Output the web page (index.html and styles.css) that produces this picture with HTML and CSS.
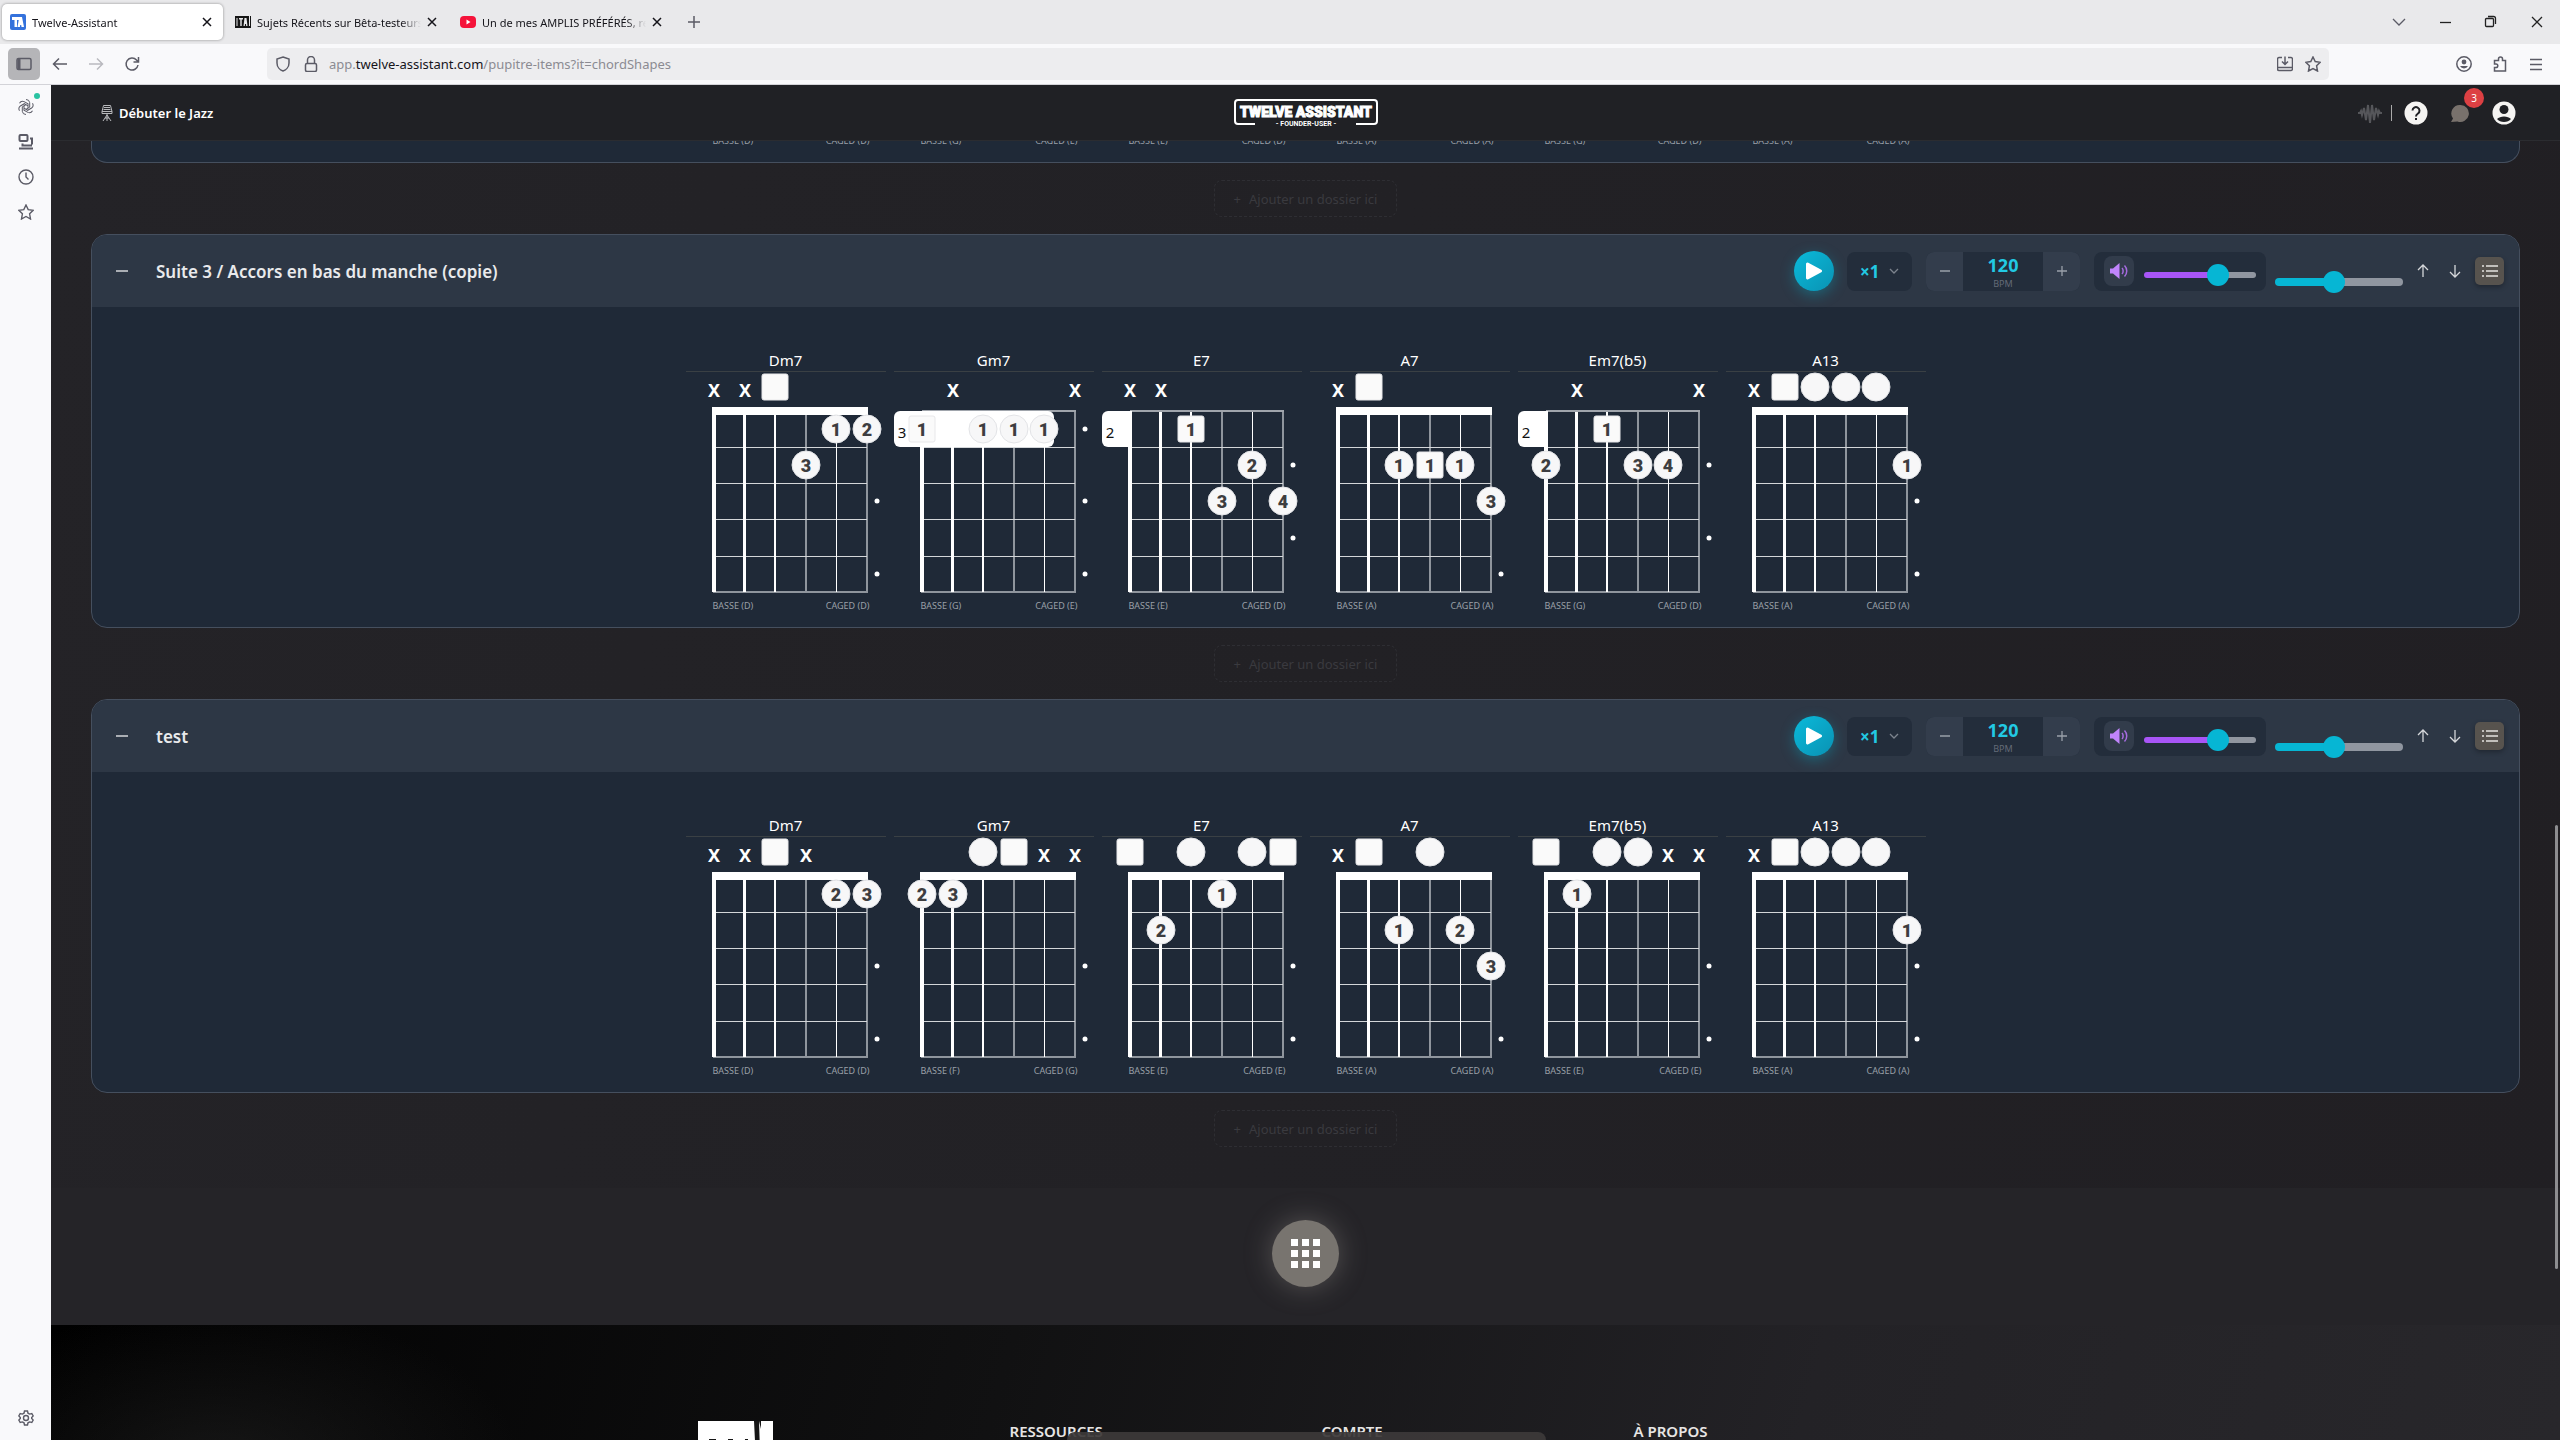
FILE: index.html
```html
<!DOCTYPE html>
<html lang="fr">
<head>
<meta charset="utf-8">
<title>Twelve-Assistant</title>
<link rel="stylesheet" href="styles.css">
</head>
<body>
<svg class="defs" aria-hidden="true">
  <defs>
    <g id="frets" fill="none" stroke="#fff">
      <path stroke="#8f959d" stroke-width="2" d="M120 39V220M181 39V221M27 220H182"/>
      <path stroke="#d3d6d9" stroke-width="1" d="M28 75.5H181M28 111.5H181M28 147.5H181M28 184.5H181"/>
      <path stroke-width="4" d="M28 39V220"/>
      <path stroke-width="3" d="M58.500 39V220"/>
      <path stroke-width="2" d="M89 39V220"/>
      <path stroke-width="1" d="M150.500 39V220"/>
    </g>
    <g id="open"><use href="#frets"/><path fill="#fff" d="M26 35H182V43H26z"/></g>
    <g id="high"><use href="#frets"/><path fill="#a0a5ac" d="M28 38H182V40H28z"/></g>
    <g id="o"><circle r="14" fill="#f7f7f8" stroke="#e3e4e7"/></g>
    <g id="s"><rect x="-13" y="-13" width="26" height="26" rx="2" fill="#fafafa" stroke="#e8e8ea"/></g>
    <g id="x"><text y="10" class="mute">X</text></g>
    <circle id="d" r="2.500" fill="#fff"/>
    <path id="pos" fill="#fff" d="M6 39H30V75H6a6 6 0 0 1-6-6V45a6 6 0 0 1 6-6z"/>
  </defs>
</svg>

<div class="tabstrip">
  <div class="tabs">
    <div class="tab active">
      <svg width="16" height="16" viewBox="0 0 16 16"><rect width="16" height="16" rx="2" fill="#3472dc"/><path fill="#fff" d="M2 3h7l1 0h2l2 10h-2.500l-.3-2h-1l-.3 2H7.500L8.700 6H7v7H4.500V6H2z"/></svg>
      <span class="label">Twelve-Assistant</span><button class="close" aria-label="Fermer l’onglet"><svg width="10" height="10" viewBox="0 0 10 10"><path d="M1 1l8 8M9 1L1 9"/></svg></button>
    </div>
    <div class="tab">
      <svg width="16" height="16" viewBox="0 0 16 16"><path fill="#151515" d="M0 2h16v12H0z"/><path fill="#e9e9eb" d="M1.500 4h1v8h-1zM4 4h4v1.500H6.700V12H5.300V5.500H4zM9.500 4h2l1 8h-1.300l-.2-2h-1l-.2 2H8.500zM14 2h1v10h-1z"/></svg>
      <span class="label">Sujets Récents sur Bêta-testeurs</span><button class="close" aria-label="Fermer l’onglet"><svg width="10" height="10" viewBox="0 0 10 10"><path d="M1 1l8 8M9 1L1 9"/></svg></button>
    </div>
    <div class="tab">
      <svg width="16" height="16" viewBox="0 0 16 16"><rect y="2" width="16" height="12" rx="4" fill="#f5133a"/><path fill="#fff" d="M6.500 5.500v5l4-2.500z"/></svg>
      <span class="label">Un de mes AMPLIS PRÉFÉRÉS, re</span><button class="close" aria-label="Fermer l’onglet"><svg width="10" height="10" viewBox="0 0 10 10"><path d="M1 1l8 8M9 1L1 9"/></svg></button>
    </div>
    <button class="newtab" aria-label="Nouvel onglet"><svg width="12" height="12" viewBox="0 0 12 12"><path d="M6 0v12M0 6h12"/></svg></button>
  </div>
  <div class="window">
    <button aria-label="Lister les onglets"><svg width="14" height="14" viewBox="0 0 14 14"><path d="M1 4l6 6 6-6"/></svg></button>
    <button aria-label="Réduire"><svg width="14" height="14" viewBox="0 0 14 14"><path stroke="#222" d="M2 7.500h11"/></svg></button>
    <button aria-label="Restaurer"><svg width="14" height="14" viewBox="0 0 14 14"><path stroke="#222" d="M1.500 4.500a1 1 0 0 1 1-1h6a1 1 0 0 1 1 1v6a1 1 0 0 1-1 1h-6a1 1 0 0 1-1-1zM4 1.500h5.500a2 2 0 0 1 2 2V9"/></svg></button>
    <button aria-label="Fermer"><svg width="14" height="14" viewBox="0 0 14 14"><path stroke="#222" d="M2 2l10 10M12 2L2 12"/></svg></button>
  </div>
</div>

<div class="navbar">
  <div class="navkeys">
    <button class="pressed" aria-label="Panneau latéral"><svg width="16" height="16" viewBox="0 0 16 16"><rect x="1" y="2.500" width="14" height="11" rx="1.500"/><path stroke-width="3" d="M3 3v10"/></svg></button>
    <button aria-label="Précédent"><svg width="16" height="16" viewBox="0 0 16 16"><path d="M15 8H1.500M7 2.500L1.500 8 7 13.500"/></svg></button>
    <button disabled aria-label="Suivant"><svg width="16" height="16" viewBox="0 0 16 16"><path d="M1 8h13.500M9 2.500L14.500 8 9 13.500"/></svg></button>
    <button aria-label="Actualiser"><svg width="16" height="16" viewBox="0 0 16 16"><path d="M14 9a6 6 0 1 1-1.500-5L14 5.500M14.500 1v5h-5"/></svg></button>
  </div>
  <div class="urlbar">
    <svg width="16" height="16" viewBox="0 0 16 16"><path d="M8 1l6 2v4c0 4-3 7-6 8-3-1-6-4-6-8V3z"/></svg>
    <svg width="16" height="16" viewBox="0 0 16 16"><rect x="2.500" y="7.500" width="11" height="8" rx="1.500"/><path d="M4.500 7.500V4a3.500 3.500 0 0 1 7 0v3.500"/></svg>
    <div class="address" role="textbox" contenteditable="true" spellcheck="false" aria-label="Adresse">app.<b>twelve-assistant.com</b>/pupitre-items?it=chordShapes</div>
    <button aria-label="Installer"><svg width="16" height="16" viewBox="0 0 16 16"><path d="M5 1.500H2A1.500 1.500 0 0 0 .5 3v10A1.500 1.500 0 0 0 2 14.500h12a1.500 1.500 0 0 0 1.500-1.500V3A1.500 1.500 0 0 0 14 1.500h-3M.5 11.500h15M8 .5v8M5 5.500l3 3 3-3"/></svg></button>
    <button aria-label="Favori"><svg width="16" height="16" viewBox="0 0 16 16"><path d="M8 1l2.200 4.600 5 .7-3.600 3.500.9 5.200L8 12.500 3.500 15l.9-5.200L.8 6.300l5-.7z"/></svg></button>
  </div>
  <div class="navend">
    <button aria-label="Compte"><svg width="16" height="16" viewBox="0 0 16 16"><circle cx="8" cy="8" r="7.200"/><circle cx="8" cy="6" r="2.400" fill="#5b5b66" stroke="none"/><path fill="#5b5b66" stroke="none" d="M4 10h8a4.500 4.500 0 0 1-8 0z"/></svg></button>
    <button aria-label="Extensions"><svg width="16" height="16" viewBox="0 0 16 16"><path d="M2.500 4.500h4V3a2 2 0 0 1 4 0v1.500h3v10.500h-11v-3.500H4a1.800 1.800 0 0 0 0-3.600H2.500z"/></svg></button>
    <button aria-label="Menu"><svg width="14" height="14" viewBox="0 0 14 14"><path d="M1 2.500h12M1 7.500h12M1 12.500h12"/></svg></button>
  </div>
</div>

<div class="view">
  <nav class="rail">
    <button class="notify" aria-label="ChatGPT"><svg width="18" height="18" viewBox="0 0 18 18"><g fill="none" stroke-width="1"><path d="M9 1.500a3.700 3.700 0 0 1 3.700 3.200v4.500L9 11.300"/><path transform="rotate(60 9 9)" d="M9 1.500a3.700 3.700 0 0 1 3.700 3.200v4.500L9 11.300"/><path transform="rotate(120 9 9)" d="M9 1.500a3.700 3.700 0 0 1 3.700 3.200v4.500L9 11.300"/><path transform="rotate(180 9 9)" d="M9 1.500a3.700 3.700 0 0 1 3.700 3.200v4.500L9 11.300"/><path transform="rotate(240 9 9)" d="M9 1.500a3.700 3.700 0 0 1 3.700 3.200v4.500L9 11.300"/><path transform="rotate(300 9 9)" d="M9 1.500a3.700 3.700 0 0 1 3.700 3.200v4.500L9 11.300"/></g></svg></button>
    <button aria-label="Onglets synchronisés"><svg width="16" height="16" viewBox="0 0 16 16"><rect x="1.500" y="1" width="8" height="6" rx="1" stroke-width="2"/><path stroke-width="2" d="M12 4.500h2v6M4.500 9.500v2H14M1 14.500h14"/></svg></button>
    <button aria-label="Historique"><svg width="16" height="16" viewBox="0 0 16 16"><circle cx="8" cy="8" r="7"/><path d="M8 3.500V8l2.500 2.500"/></svg></button>
    <button aria-label="Marque-pages"><svg width="16" height="16" viewBox="0 0 16 16"><path d="M8 1l2.200 4.600 5 .7-3.600 3.500.9 5.200L8 12.500 3.500 15l.9-5.200L.8 6.300l5-.7z"/></svg></button>
    <button class="last" aria-label="Paramètres"><svg width="16" height="16" viewBox="0 0 16 16"><circle cx="8" cy="8" r="2.500"/><path d="M6.500 1h3l.5 2.200 1.600.9 2.200-.6 1.400 2.400L13.700 7.500v1l1.500 1.600-1.400 2.400-2.200-.6-1.600.9L9.500 15h-3L6 12.800l-1.600-.9-2.200.6L.8 10.100l1.500-1.600v-1L.8 5.900l1.400-2.400 2.200.6L6 3.200z"/></svg></button>
  </nav>

  <div class="app">
    <header class="topbar">
      <a class="place" href="#"><svg width="12" height="18" viewBox="0 0 12 18" fill="none" stroke="#b9babd" stroke-width="1"><path d="M2.500 1.500h7l1.500 6H1zM3 3.500h6M2.500 5.500h7M1 7.500v2h10v-2M6 9.500V14M6 11l-4 6M6 11l4 6M4 14h4M6 14v3"/></svg>Débuter le Jazz</a>
      <a class="brand" href="#" aria-label="Twelve Assistant"><svg width="146" height="30" viewBox="0 0 146 30"><path fill="none" stroke="#fff" stroke-width="2" d="M22 26H5a3 3 0 0 1-3-3V5a3 3 0 0 1 3-3h136a3 3 0 0 1 3 3v18a3 3 0 0 1-3 3h-18"/><text class="brand-name" x="73" y="19" text-anchor="middle">TWELVE ASSISTANT</text><text class="brand-sub" x="73" y="28" text-anchor="middle">- FOUNDER-USER -</text></svg></a>
      <div class="tools">
        <svg width="24" height="20" viewBox="0 0 24 20" stroke="#55565a" stroke-width="2" fill="none"><path d="M0 10h2l1-2 1 4 2-7 2 12 2-15 2 18 2-18 2 15 2-12 2 7 1-4 1 2h2"/></svg>
        <span class="rule"></span>
        <button aria-label="Aide"><svg width="24" height="24" viewBox="0 0 24 24"><circle cx="12" cy="12" r="11.500" fill="#f5f4f2"/><path fill="none" stroke="#1f2024" stroke-width="2" d="M8.500 9.500a3.500 3.500 0 1 1 5.500 3c-1.500 1-2 1.500-2 3M12 17v2"/></svg></button>
        <button class="chat" aria-label="Messages"><svg width="20" height="20" viewBox="0 0 20 20"><path fill="#78716c" d="M10.500 2a8.500 8.500 0 1 1-3 16.500L1 19l2-3.500A8.500 8.500 0 0 1 10.500 2z"/></svg><span class="badge">3</span></button>
        <button aria-label="Profil"><svg width="24" height="24" viewBox="0 0 24 24"><circle cx="12" cy="12" r="11.500" fill="#f5f4f2"/><circle cx="12" cy="8.500" r="4.500" fill="#1f2024"/><path fill="#1f2024" d="M5 18c3-3.500 11-3.500 14 0-3 4-11 4-14 0z"/></svg></button>
      </div>
    </header>

    <main class="folders">
      <section class="folder cut">
        <div class="chords">
          <div class="tags"><span>BASSE (D)</span><span>CAGED (D)</span></div>
          <div class="tags"><span>BASSE (G)</span><span>CAGED (E)</span></div>
          <div class="tags"><span>BASSE (E)</span><span>CAGED (D)</span></div>
          <div class="tags"><span>BASSE (A)</span><span>CAGED (A)</span></div>
          <div class="tags"><span>BASSE (G)</span><span>CAGED (D)</span></div>
          <div class="tags"><span>BASSE (A)</span><span>CAGED (A)</span></div>
        </div>
      </section>
      <button class="add"><span>+</span>Ajouter un dossier ici</button>

      <section class="folder">
        <header class="bar">
          <button class="fold" aria-label="Replier"><svg width="14" height="14" viewBox="0 0 14 14"><path d="M1 7h12"/></svg></button>
          <h2>Suite 3 / Accors en bas du manche (copie)</h2>
          <button class="play" aria-label="Lecture"><svg width="40" height="40" viewBox="0 0 40 40"><path fill="#fff" d="M12 13a1.500 1.500 0 0 1 2.300-1.300l13 7a1.500 1.500 0 0 1 0 2.600l-13 7A1.500 1.500 0 0 1 12 27z"/></svg></button>
          <div class="times"><select aria-label="Répétitions"><option>×1</option></select><svg width="12" height="12" viewBox="0 0 12 12"><path d="M2 4l4 4 4-4"/></svg></div>
          <div class="tempo">
            <button aria-label="Ralentir"><svg width="12" height="12" viewBox="0 0 12 12"><path d="M1 6h10"/></svg></button>
            <label><input type="text" value="120"><span>BPM</span></label>
            <button aria-label="Accélérer"><svg width="12" height="12" viewBox="0 0 12 12"><path d="M1 6h10M6 1v10"/></svg></button>
          </div>
          <div class="volume">
            <button aria-label="Muet"><svg width="20" height="20" viewBox="0 0 20 20"><path fill="#c084fc" d="M1 7.500h3L10.500 2v16L4 12.500H1z"/><path fill="none" stroke="#a66be0" stroke-width="1.500" d="M13 7c1.500 1.500 1.500 4.500 0 6M15.500 4.500c3 3 3 8 0 11"/></svg></button>
            <input class="purple" type="range" value="70" aria-label="Volume">
          </div>
          <input class="cyan" type="range" value="45" aria-label="Taille">
          <div class="moves">
            <button aria-label="Monter"><svg width="14" height="14" viewBox="0 0 14 14"><path d="M7 13V1M2 6l5-5 5 5"/></svg></button>
            <button aria-label="Descendre"><svg width="14" height="14" viewBox="0 0 14 14"><path d="M7 1v12M2 8l5 5 5-5"/></svg></button>
          </div>
          <button class="list" aria-label="Liste"><svg width="16" height="16" viewBox="0 0 16 16"><path d="M0 3h2M4 3h12M0 8h2M4 8h12M0 13h2M4 13h12"/></svg></button>
        </header>
        <div class="chords">
          <article><h3>Dm7</h3><svg class="grid" viewBox="0 0 200 228"><use href="#open"/><use href="#x" x="28" y="15"/><use href="#x" x="59" y="15"/><use href="#s" x="89" y="15"/><use href="#o" x="150" y="57"/><text x="150" y="64">1</text><use href="#o" x="181" y="57"/><text x="181" y="64">2</text><use href="#o" x="120" y="93"/><text x="120" y="100">3</text><use href="#d" x="191" y="129"/><use href="#d" x="191" y="202"/></svg><div class="tags"><span>BASSE (D)</span><span>CAGED (D)</span></div></article>
          <article><h3>Gm7</h3><svg class="grid" viewBox="0 0 200 228"><use href="#high"/><rect y="39" width="160" height="36" rx="6" fill="#fff"/><text class="fret" x="8" y="66">3</text><use href="#x" x="59" y="15"/><use href="#x" x="181" y="15"/><use href="#s" x="28" y="57"/><text x="28" y="64">1</text><use href="#o" x="89" y="57"/><text x="89" y="64">1</text><use href="#o" x="120" y="57"/><text x="120" y="64">1</text><use href="#o" x="150" y="57"/><text x="150" y="64">1</text><use href="#d" x="191" y="57"/><use href="#d" x="191" y="129"/><use href="#d" x="191" y="202"/></svg><div class="tags"><span>BASSE (G)</span><span>CAGED (E)</span></div></article>
          <article><h3>E7</h3><svg class="grid" viewBox="0 0 200 228"><use href="#high"/><use href="#pos"/><text class="fret" x="8" y="66">2</text><use href="#x" x="28" y="15"/><use href="#x" x="59" y="15"/><use href="#s" x="89" y="57"/><text x="89" y="64">1</text><use href="#o" x="150" y="93"/><text x="150" y="100">2</text><use href="#o" x="120" y="129"/><text x="120" y="136">3</text><use href="#o" x="181" y="129"/><text x="181" y="136">4</text><use href="#d" x="191" y="93"/><use href="#d" x="191" y="166"/></svg><div class="tags"><span>BASSE (E)</span><span>CAGED (D)</span></div></article>
          <article><h3>A7</h3><svg class="grid" viewBox="0 0 200 228"><use href="#open"/><use href="#x" x="28" y="15"/><use href="#s" x="59" y="15"/><use href="#o" x="89" y="93"/><text x="89" y="100">1</text><use href="#s" x="120" y="93"/><text x="120" y="100">1</text><use href="#o" x="150" y="93"/><text x="150" y="100">1</text><use href="#o" x="181" y="129"/><text x="181" y="136">3</text><use href="#d" x="191" y="202"/></svg><div class="tags"><span>BASSE (A)</span><span>CAGED (A)</span></div></article>
          <article><h3>Em7(b5)</h3><svg class="grid" viewBox="0 0 200 228"><use href="#high"/><use href="#pos"/><text class="fret" x="8" y="66">2</text><use href="#x" x="59" y="15"/><use href="#x" x="181" y="15"/><use href="#s" x="89" y="57"/><text x="89" y="64">1</text><use href="#o" x="28" y="93"/><text x="28" y="100">2</text><use href="#o" x="120" y="93"/><text x="120" y="100">3</text><use href="#o" x="150" y="93"/><text x="150" y="100">4</text><use href="#d" x="191" y="93"/><use href="#d" x="191" y="166"/></svg><div class="tags"><span>BASSE (G)</span><span>CAGED (D)</span></div></article>
          <article><h3>A13</h3><svg class="grid" viewBox="0 0 200 228"><use href="#open"/><use href="#x" x="28" y="15"/><use href="#s" x="59" y="15"/><use href="#o" x="89" y="15"/><use href="#o" x="120" y="15"/><use href="#o" x="150" y="15"/><use href="#o" x="181" y="93"/><text x="181" y="100">1</text><use href="#d" x="191" y="129"/><use href="#d" x="191" y="202"/></svg><div class="tags"><span>BASSE (A)</span><span>CAGED (A)</span></div></article>
        </div>
      </section>
      <button class="add"><span>+</span>Ajouter un dossier ici</button>

      <section class="folder">
        <header class="bar">
          <button class="fold" aria-label="Replier"><svg width="14" height="14" viewBox="0 0 14 14"><path d="M1 7h12"/></svg></button>
          <h2>test</h2>
          <button class="play" aria-label="Lecture"><svg width="40" height="40" viewBox="0 0 40 40"><path fill="#fff" d="M12 13a1.500 1.500 0 0 1 2.300-1.300l13 7a1.500 1.500 0 0 1 0 2.600l-13 7A1.500 1.500 0 0 1 12 27z"/></svg></button>
          <div class="times"><select aria-label="Répétitions"><option>×1</option></select><svg width="12" height="12" viewBox="0 0 12 12"><path d="M2 4l4 4 4-4"/></svg></div>
          <div class="tempo">
            <button aria-label="Ralentir"><svg width="12" height="12" viewBox="0 0 12 12"><path d="M1 6h10"/></svg></button>
            <label><input type="text" value="120"><span>BPM</span></label>
            <button aria-label="Accélérer"><svg width="12" height="12" viewBox="0 0 12 12"><path d="M1 6h10M6 1v10"/></svg></button>
          </div>
          <div class="volume">
            <button aria-label="Muet"><svg width="20" height="20" viewBox="0 0 20 20"><path fill="#c084fc" d="M1 7.500h3L10.500 2v16L4 12.500H1z"/><path fill="none" stroke="#a66be0" stroke-width="1.500" d="M13 7c1.500 1.500 1.500 4.500 0 6M15.500 4.500c3 3 3 8 0 11"/></svg></button>
            <input class="purple" type="range" value="70" aria-label="Volume">
          </div>
          <input class="cyan" type="range" value="45" aria-label="Taille">
          <div class="moves">
            <button aria-label="Monter"><svg width="14" height="14" viewBox="0 0 14 14"><path d="M7 13V1M2 6l5-5 5 5"/></svg></button>
            <button aria-label="Descendre"><svg width="14" height="14" viewBox="0 0 14 14"><path d="M7 1v12M2 8l5 5 5-5"/></svg></button>
          </div>
          <button class="list" aria-label="Liste"><svg width="16" height="16" viewBox="0 0 16 16"><path d="M0 3h2M4 3h12M0 8h2M4 8h12M0 13h2M4 13h12"/></svg></button>
        </header>
        <div class="chords">
          <article><h3>Dm7</h3><svg class="grid" viewBox="0 0 200 228"><use href="#open"/><use href="#x" x="28" y="15"/><use href="#x" x="59" y="15"/><use href="#s" x="89" y="15"/><use href="#x" x="120" y="15"/><use href="#o" x="150" y="57"/><text x="150" y="64">2</text><use href="#o" x="181" y="57"/><text x="181" y="64">3</text><use href="#d" x="191" y="129"/><use href="#d" x="191" y="202"/></svg><div class="tags"><span>BASSE (D)</span><span>CAGED (D)</span></div></article>
          <article><h3>Gm7</h3><svg class="grid" viewBox="0 0 200 228"><use href="#open"/><use href="#o" x="89" y="15"/><use href="#s" x="120" y="15"/><use href="#x" x="150" y="15"/><use href="#x" x="181" y="15"/><use href="#o" x="28" y="57"/><text x="28" y="64">2</text><use href="#o" x="59" y="57"/><text x="59" y="64">3</text><use href="#d" x="191" y="129"/><use href="#d" x="191" y="202"/></svg><div class="tags"><span>BASSE (F)</span><span>CAGED (G)</span></div></article>
          <article><h3>E7</h3><svg class="grid" viewBox="0 0 200 228"><use href="#open"/><use href="#s" x="28" y="15"/><use href="#o" x="89" y="15"/><use href="#o" x="150" y="15"/><use href="#s" x="181" y="15"/><use href="#o" x="120" y="57"/><text x="120" y="64">1</text><use href="#o" x="59" y="93"/><text x="59" y="100">2</text><use href="#d" x="191" y="129"/><use href="#d" x="191" y="202"/></svg><div class="tags"><span>BASSE (E)</span><span>CAGED (E)</span></div></article>
          <article><h3>A7</h3><svg class="grid" viewBox="0 0 200 228"><use href="#open"/><use href="#x" x="28" y="15"/><use href="#s" x="59" y="15"/><use href="#o" x="120" y="15"/><use href="#o" x="89" y="93"/><text x="89" y="100">1</text><use href="#o" x="150" y="93"/><text x="150" y="100">2</text><use href="#o" x="181" y="129"/><text x="181" y="136">3</text><use href="#d" x="191" y="202"/></svg><div class="tags"><span>BASSE (A)</span><span>CAGED (A)</span></div></article>
          <article><h3>Em7(b5)</h3><svg class="grid" viewBox="0 0 200 228"><use href="#open"/><use href="#s" x="28" y="15"/><use href="#o" x="89" y="15"/><use href="#o" x="120" y="15"/><use href="#x" x="150" y="15"/><use href="#x" x="181" y="15"/><use href="#o" x="59" y="57"/><text x="59" y="64">1</text><use href="#d" x="191" y="129"/><use href="#d" x="191" y="202"/></svg><div class="tags"><span>BASSE (E)</span><span>CAGED (E)</span></div></article>
          <article><h3>A13</h3><svg class="grid" viewBox="0 0 200 228"><use href="#open"/><use href="#x" x="28" y="15"/><use href="#s" x="59" y="15"/><use href="#o" x="89" y="15"/><use href="#o" x="120" y="15"/><use href="#o" x="150" y="15"/><use href="#o" x="181" y="93"/><text x="181" y="100">1</text><use href="#d" x="191" y="129"/><use href="#d" x="191" y="202"/></svg><div class="tags"><span>BASSE (A)</span><span>CAGED (A)</span></div></article>
        </div>
      </section>
      <button class="add"><span>+</span>Ajouter un dossier ici</button>
    </main>

    <div class="launch">
      <button aria-label="Applications"><svg width="30" height="30" viewBox="0 0 30 30"><path fill="#fff" d="M0 0h7v7H0zM11 0h7v7h-7zM22 0h7v7h-7zM0 11h7v7H0zM11 11h7v7h-7zM22 11h7v7h-7zM0 22h7v7H0zM11 22h7v7h-7zM22 22h7v7h-7z"/></svg></button>
    </div>

    <footer class="foot">
      <div class="cols">
        <svg width="76" height="60" viewBox="0 0 76 60"><path fill="#fff" d="M0 0h75v60H0z"/><path fill="#151515" d="M11 18h5v42h-5zM11 18h7v3h-7zM30 18h5v42h-5zM47 18h3v42h-5zM56 0h5l2 60h-4zM61 0h2v8z"/></svg>
        <h4>RESSOURCES</h4>
        <h4>COMPTE</h4>
        <h4>À PROPOS</h4>
      </div>
    </footer>
    <div class="dock"></div>
    <div class="thumb"></div>
  </div>
</div>
</body>
</html>
```
FILE: styles.css
```css
* { box-sizing: border-box; }
body {
  margin: 0;
  height: 100vh;
  display: flex;
  flex-direction: column;
  overflow: hidden;
  font-family: "Noto Sans", "Open Sans", sans-serif;
  color: #fff;
}
button, input, select { font: inherit; color: inherit; border: 0; background: none; padding: 0; margin: 0; }
button { display: flex; align-items: center; justify-content: center; }
h2, h3, h4 { margin: 0; font-weight: 400; }
a { color: inherit; text-decoration: none; }
svg { display: block; flex: none; }
.defs { position: absolute; width: 0; height: 0; }

/* Browser window */
.tabstrip {
  flex: none;
  display: flex;
  justify-content: space-between;
  height: 44px;
  padding: 4px 0 4px 2px;
  background: #e9e9eb;
  color: #15141a;
  font-size: 11px;
}
.tabs { display: flex; gap: 4px; }
.tab { display: flex; align-items: center; gap: 6px; width: 221px; padding: 0 11px 0 8px; border-radius: 5px; }
.tab.active { background: #fff; box-shadow: 0 0 3px rgba(0, 0, 0, .4); }
.tab .label {
  flex: 1;
  overflow: hidden;
  white-space: nowrap;
  mask-image: linear-gradient(to left, transparent, #000 20px);
}
.tab .close { stroke: #15141a; stroke-width: 1.5; }
.newtab { width: 34px; stroke: #5b5b66; stroke-width: 1.5; }
.window { display: flex; }
.window button { width: 46px; fill: none; stroke: #5b5b66; stroke-width: 1.3; }
.navbar {
  flex: none;
  display: grid;
  grid-template-columns: 259px 1fr 223px;
  height: 41px;
  padding: 4px 8px;
  background: #f9f9fb;
  border-bottom: 1px solid #d3d3d8;
  fill: none;
  stroke: #5b5b66;
  stroke-width: 1.5;
  color: #8b8b92;
}
.navkeys, .navend { display: flex; gap: 4px; }
.navkeys button, .navend button { width: 32px; height: 32px; border-radius: 5px; }
.navend { justify-content: flex-end; }
.navkeys .pressed { background: #b5b5b8; }
.navkeys button:disabled { opacity: .4; }
.urlbar {
  display: flex;
  align-items: center;
  gap: 12px;
  height: 32px;
  padding: 0 8px;
  background: #ededef;
  border-radius: 5px;
}
.address { flex: 1; font-size: 13px; stroke: none; margin-left: -2px; }
.address b { font-weight: 400; color: #15141a; }

.view { flex: 1; display: flex; min-height: 0; }
.rail {
  flex: none;
  display: flex;
  flex-direction: column;
  gap: 3px;
  width: 51px;
  padding: 6px 10px;
  background: #f9f9fb;
  fill: none;
  stroke: #5b5b66;
  stroke-width: 1.4;
}
.rail button { position: relative; width: 32px; height: 32px; }
.rail .last { margin-top: auto; }
.notify::after {
  content: "";
  position: absolute;
  top: 2px;
  right: 2px;
  width: 6px;
  height: 6px;
  border-radius: 50%;
  background: #2ac3a2;
}

/* Application */
.app {
  position: relative;
  flex: 1;
  display: flex;
  flex-direction: column;
  min-width: 0;
  overflow: hidden;
  background: linear-gradient(100deg, #242327, #222125 50%, #211f23);
}
.topbar {
  position: absolute;
  z-index: 2;
  top: 0;
  left: 0;
  right: 0;
  display: grid;
  grid-template-columns: 1fr auto 1fr;
  align-items: center;
  height: 56px;
  padding: 0 44px 0 44px;
  background: #202125;
  border-bottom: 1px solid #2b2c30;
}
.place { display: flex; align-items: center; gap: 6px; padding-left: 6px; font-size: 13px; font-weight: 600; }
.brand-name { font: 900 14px Roboto, sans-serif; fill: #fff; stroke: #fff; stroke-width: 1; }
.brand-sub { font: 700 7px Roboto, sans-serif; fill: #fff; }
.tools { display: flex; align-items: center; justify-content: flex-end; }
.rule { width: 1px; height: 16px; margin: 0 12px 0 9px; background: #aaa; }
.chat { position: relative; margin: 0 22px; }
.badge {
  position: absolute;
  left: 14px;
  top: -15px;
  width: 20px;
  height: 20px;
  border-radius: 50%;
  background: #dc4043;
  font-size: 10px;
  line-height: 20px;
}

.folders { padding: 0 40px 24px; }
.folder {
  overflow: hidden;
  border: 1px solid #454f5e;
  border-radius: 16px;
  background: #1f2937;
}
.folder.cut { border-top: 0; border-radius: 0 0 16px 16px; }
.folder.cut .chords { padding-top: 50px; }
.bar {
  display: flex;
  align-items: center;
  height: 72px;
  padding: 0 15px 0 20px;
  background: #2d3745;
}
.bar h2 { flex: 1; padding-left: 24px; font-size: 17px; font-weight: 600; color: #e9eaec; }
.fold { width: 20px; height: 20px; stroke: #d5d7da; stroke-width: 1.5; }
.play {
  width: 40px;
  height: 40px;
  border-radius: 50%;
  background: linear-gradient(135deg, #0abada, #0a92b3);
  box-shadow: 0 4px 14px rgba(6, 182, 212, .35);
}
.times, .tempo, .volume { height: 39px; border-radius: 8px; background: #232d3b; }
.times { display: grid; width: 65px; margin: 0 14px 0 13px; }
.times > * { grid-area: 1 / 1; }
.times select { appearance: none; padding-left: 13px; font-size: 17px; font-weight: 700; color: #22c9e3; }
.times svg { place-self: center end; margin-right: 12px; pointer-events: none; fill: none; stroke: #7d848e; stroke-width: 1.3; }
.tempo { display: flex; width: 154px; margin-right: 14px; overflow: hidden; }
.tempo button { width: 37px; background: #333d4c; stroke: #9aa0a9; stroke-width: 1.3; }
.tempo label { flex: 1; display: flex; flex-direction: column; align-items: center; }
.tempo input { width: 100%; height: 27px; text-align: center; font-size: 18px; font-weight: 700; color: #22c9e3; }
.tempo span { font-size: 9px; line-height: 9px; color: #636b77; }
.volume { display: flex; align-items: center; gap: 10px; width: 172px; padding: 0 10px; margin-right: 9px; }
.volume button { width: 30px; height: 30px; border-radius: 8px; background: #323c4b; }
input[type="range"] { appearance: none; border-radius: 4px; }
.purple { flex: 1; min-width: 0; height: 6px; margin-top: 8px; background: linear-gradient(to right, #a855f7 66%, #9096a0 66%); }
.cyan { width: 128px; height: 8px; margin-top: 22px; background: linear-gradient(to right, #06b6d4 46%, #9096a0 46%); }
input[type="range"]::-webkit-slider-thumb { appearance: none; width: 22px; height: 22px; border-radius: 50%; background: #06b6d4; }
.moves { display: flex; gap: 8px; margin: 0 8px; }
.moves button { width: 24px; height: 24px; fill: none; stroke: #d5d7da; stroke-width: 1.3; }
.list { width: 29px; height: 28px; border-radius: 5px; background: #57534e; stroke: #e5e3e0; stroke-width: 1.5; box-shadow: 0 2px 5px rgba(0, 0, 0, .3); }

.chords { display: flex; justify-content: center; gap: 8px; padding: 40px 0 15px; }
.chords > * { flex: none; width: 200px; }
.chords h3 { height: 25px; border-bottom: 1px solid #3a4044; font-size: 15px; line-height: 26px; text-align: center; }
.grid { width: 200px; height: 228px; overflow: visible; }
.grid text { font: 900 18px Roboto, sans-serif; text-anchor: middle; fill: #3d3d40; }
.grid .fret { font: 400 15px "Noto Sans", sans-serif; fill: #111; }
.grid .mute, .mute { font: 700 18px "Noto Sans", sans-serif; text-anchor: middle; fill: #fff; }
.tags { display: flex; justify-content: space-between; padding: 0 16px 0 27px; font-size: 9px; line-height: 12px; color: #9aa0a8; }
.add {
  gap: 8px;
  width: 183px;
  height: 37px;
  margin: 17px auto;
  border: 1px dashed #2e2e33;
  border-radius: 8px;
  font-size: 13px;
  color: #3a3a3f;
}
.launch { flex: none; display: flex; justify-content: center; align-items: center; height: 137px; padding-bottom: 6px; background: #252428; }
.launch button { width: 67px; height: 67px; border-radius: 50%; background: #78746f; box-shadow: 0 0 28px rgba(160, 155, 150, .4); }

.foot {
  flex: 1;
  padding-top: 96px;
  overflow: hidden;
  background: radial-gradient(ellipse 300px 160px at 170px 140px, rgba(40, 40, 40, .5), transparent), linear-gradient(105deg, #000, #111112 38%, #232226 70%, #28272b);
}
.cols { display: grid; grid-template-columns: repeat(4, 1fr); gap: 32px; max-width: 1216px; margin: 0 auto; }
.cols h4 { font-size: 15px; font-weight: 600; line-height: 20px; color: #e7e5e4; }
.dock {
  position: absolute;
  left: 50%;
  bottom: 0;
  width: 479px;
  height: 8px;
  margin-left: -239px;
  border-radius: 12px 12px 0 0;
  background: rgba(60, 57, 57, .93);
}
.thumb { position: absolute; right: 2px; top: 740px; width: 3px; height: 444px; border-radius: 2px; background: #8d8d90; }
```
